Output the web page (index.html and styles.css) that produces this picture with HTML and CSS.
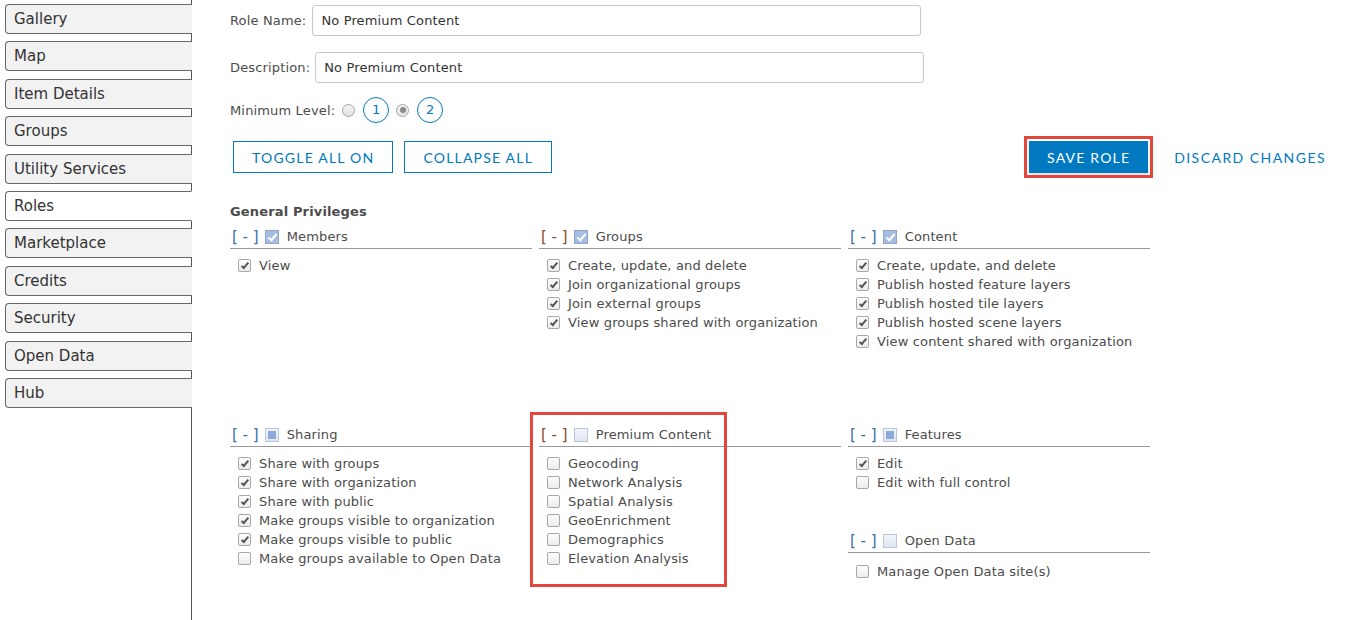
FILE: index.html
```html
<!DOCTYPE html>
<html lang="en">
<head>
    <meta charset="UTF-8">
    <title>Roles</title>
    <link rel="stylesheet" href="styles.css">
</head>
<body>

<div class="sidebar">
    <div class="tab">Gallery</div>
    <div class="tab">Map</div>
    <div class="tab">Item Details</div>
    <div class="tab">Groups</div>
    <div class="tab">Utility Services</div>
    <div class="tab active">Roles</div>
    <div class="tab">Marketplace</div>
    <div class="tab">Credits</div>
    <div class="tab">Security</div>
    <div class="tab">Open Data</div>
    <div class="tab">Hub</div>
</div>

<div class="main">
    <div class="field">
        <label class="field-label">Role Name:</label>
        <div class="text-input">No Premium Content</div>
    </div>
    <div class="field field-desc">
        <label class="field-label">Description:</label>
        <div class="text-input">No Premium Content</div>
    </div>
    <div class="level">
        <span class="field-label">Minimum Level:</span>
        <span class="radio"></span>
        <span class="level-num">1</span>
        <span class="radio on"></span>
        <span class="level-num">2</span>
    </div>

    <div class="actions">
        <div class="left-actions">
            <button class="btn-outline">TOGGLE ALL ON</button>
            <button class="btn-outline">COLLAPSE ALL</button>
        </div>
        <div class="right-actions">
            <button class="btn-save">SAVE ROLE</button>
            <button class="btn-link">DISCARD CHANGES</button>
        </div>
    </div>

    <h4 class="title">General Privileges</h4>

    <div class="privileges">
        <div class="group">
            <div class="group-head"><span class="toggle">[ - ]</span><span class="hcb on"></span>Members</div>
            <ul>
                <li><span class="cb on"></span>View</li>
            </ul>
        </div>
        <div class="group">
            <div class="group-head"><span class="toggle brown">[ - ]</span><span class="hcb on"></span>Groups</div>
            <ul>
                <li><span class="cb on"></span>Create, update, and delete</li>
                <li><span class="cb on"></span>Join organizational groups</li>
                <li><span class="cb on"></span>Join external groups</li>
                <li><span class="cb on"></span>View groups shared with organization</li>
            </ul>
        </div>
        <div class="group">
            <div class="group-head"><span class="toggle">[ - ]</span><span class="hcb on"></span>Content</div>
            <ul>
                <li><span class="cb on"></span>Create, update, and delete</li>
                <li><span class="cb on"></span>Publish hosted feature layers</li>
                <li><span class="cb on"></span>Publish hosted tile layers</li>
                <li><span class="cb on"></span>Publish hosted scene layers</li>
                <li><span class="cb on"></span>View content shared with organization</li>
            </ul>
        </div>

        <div class="group">
            <div class="group-head"><span class="toggle">[ - ]</span><span class="hcb part"></span>Sharing</div>
            <ul>
                <li><span class="cb on"></span>Share with groups</li>
                <li><span class="cb on"></span>Share with organization</li>
                <li><span class="cb on"></span>Share with public</li>
                <li><span class="cb on"></span>Make groups visible to organization</li>
                <li><span class="cb on"></span>Make groups visible to public</li>
                <li><span class="cb"></span>Make groups available to Open Data</li>
            </ul>
        </div>
        <div class="group premium">
            <div class="highlight"></div>
            <div class="group-head"><span class="toggle brown">[ - ]</span><span class="hcb"></span>Premium Content</div>
            <ul>
                <li><span class="cb"></span>Geocoding</li>
                <li><span class="cb"></span>Network Analysis</li>
                <li><span class="cb"></span>Spatial Analysis</li>
                <li><span class="cb"></span>GeoEnrichment</li>
                <li><span class="cb"></span>Demographics</li>
                <li><span class="cb"></span>Elevation Analysis</li>
            </ul>
        </div>
        <div class="group">
            <div class="group-head"><span class="toggle">[ - ]</span><span class="hcb part"></span>Features</div>
            <ul>
                <li><span class="cb on"></span>Edit</li>
                <li><span class="cb"></span>Edit with full control</li>
            </ul>
            <div class="group-head sub-head"><span class="toggle">[ - ]</span><span class="hcb"></span>Open Data</div>
            <ul class="sub-list">
                <li><span class="cb"></span>Manage Open Data site(s)</li>
            </ul>
        </div>
    </div>
</div>

</body>
</html>
```

FILE: styles.css
```css
body {
    margin: 0;
    font-family: "DejaVu Sans", Verdana, sans-serif;
    color: #4c4c4c;
    display: flex;
    background: #fff;
    height: 100vh;
    overflow: hidden;
}
.sidebar {
    width: 192px;
    flex: none;
    border-right: 1px solid #555;
    padding-top: 4px;
    box-sizing: border-box;
    height: 100%;
}
.tab {
    margin-left: 5px;
    margin-right: -1px;
    margin-bottom: 7.4px;
    height: 30px;
    box-sizing: border-box;
    border: 1px solid #666;
    border-right: none;
    border-radius: 4px 0 0 4px;
    background: #f2f2f2;
    color: #333;
    font-size: 15px;
    line-height: 28px;
    padding-left: 8px;
}
.tab.active {
    background: #fff;
    border-right: 1px solid #fff;
}
.main {
    flex: 1;
    padding-left: 38px;
    padding-top: 5px;
    padding-right: 30px;
    font-size: 13px;
    letter-spacing: 0.15px;
}
.field {
    display: flex;
    align-items: center;
    height: 31px;
}
.field-desc {
    margin-top: 16px;
}
.field-label {
    margin-right: 6px;
}
.field-desc .field-label {
    margin-right: 5px;
}
.text-input {
    width: 609px;
    height: 31px;
    box-sizing: border-box;
    border: 1px solid #c8c8c8;
    border-radius: 3px;
    padding-left: 8px;
    line-height: 29px;
    color: #333;
}
.level {
    display: flex;
    align-items: center;
    margin-top: 14px;
    height: 26px;
}
.level .field-label {
    margin-right: 7px;
}
.radio {
    width: 11px;
    height: 11px;
    border: 1px solid #a6a6a6;
    border-radius: 50%;
    background: linear-gradient(#f4f4f4, #e2e2e2);
    position: relative;
    margin-right: 8px;
}
.radio.on::after {
    content: "";
    position: absolute;
    left: 2.5px;
    top: 2.5px;
    width: 6px;
    height: 6px;
    border-radius: 50%;
    background: #8a8a8a;
}
.level-num {
    width: 24px;
    height: 24px;
    border: 1px solid #0079c1;
    border-radius: 50%;
    color: #0079c1;
    text-align: center;
    line-height: 24px;
    margin-right: 7px;
    letter-spacing: 0;
}
.actions {
    display: flex;
    justify-content: space-between;
    align-items: center;
    margin-top: 18px;
}
.left-actions {
    display: flex;
    gap: 11px;
    margin-left: 3px;
}
.right-actions {
    display: flex;
    align-items: center;
    gap: 26px;
}
button {
    font-family: Lato, sans-serif;
    font-size: 14px;
    letter-spacing: 1.2px;
    height: 32px;
    cursor: pointer;
}
.btn-outline {
    background: #fff;
    color: #0079c1;
    border: 1px solid #0079c1;
    padding: 0 18px;
}
.btn-save {
    background: #0079c1;
    color: #fff;
    border: none;
    width: 119px;
    outline: 3px solid #e5463b;
    outline-offset: 2px;
    box-shadow: 0 2px 3px rgba(0,0,0,0.15);
}
.btn-link {
    background: none;
    border: none;
    color: #0079c1;
    padding: 0;
    letter-spacing: 1.45px;
}
.title {
    font-size: 13px;
    font-weight: bold;
    margin: 31px 0 6px;
    line-height: 16px;
}
.privileges {
    display: grid;
    grid-template-columns: 302px 302px 302px;
    grid-template-rows: 198px auto;
    column-gap: 7px;
}
.group {
    position: relative;
}
.group-head {
    height: 22px;
    border-bottom: 1px solid #999;
    display: flex;
    align-items: center;
    padding-left: 2px;
    line-height: 18px;
}
.sub-head {
    margin-top: 38px;
}
.toggle {
    font-size: 15px;
    color: #3b6ea8;
    margin-right: 6px;
    white-space: pre;
    letter-spacing: 0;
}
.toggle.brown {
    color: #8b4a2a;
}
.hcb {
    width: 12px;
    height: 12px;
    border: 1px solid #b7c6dc;
    background: linear-gradient(#f2f5fa, #dfe6f0);
    margin-right: 8px;
    position: relative;
}
.hcb.on {
    background: #a7bde0;
    border-color: #8fa6cc;
}
.hcb.on::after {
    content: "";
    position: absolute;
    left: 4px;
    top: 1px;
    width: 3px;
    height: 7px;
    border-right: 2px solid #fff;
    border-bottom: 2px solid #fff;
    transform: rotate(40deg);
}
.hcb.part::after {
    content: "";
    position: absolute;
    left: 2px;
    top: 2px;
    width: 8px;
    height: 8px;
    background: #8da9d8;
}
ul {
    list-style: none;
    margin: 0;
    padding: 7px 0 0 8px;
}
.sub-list {
    padding-top: 9px;
}
li {
    display: flex;
    align-items: center;
    height: 19px;
}
.cb {
    width: 11px;
    height: 11px;
    border: 1px solid #a8a8a8;
    border-radius: 2px;
    background: linear-gradient(#fdfdfd, #ececec);
    margin-right: 8px;
    position: relative;
    flex: none;
}
.cb.on::after {
    content: "";
    position: absolute;
    left: 3.5px;
    top: 1px;
    width: 2px;
    height: 6px;
    border-right: 2px solid #555;
    border-bottom: 2px solid #555;
    transform: rotate(40deg);
}
.highlight {
    position: absolute;
    left: -9px;
    top: -12px;
    width: 197px;
    height: 175px;
    box-sizing: border-box;
    border: 3px solid #e5463b;
    pointer-events: none;
}
```
